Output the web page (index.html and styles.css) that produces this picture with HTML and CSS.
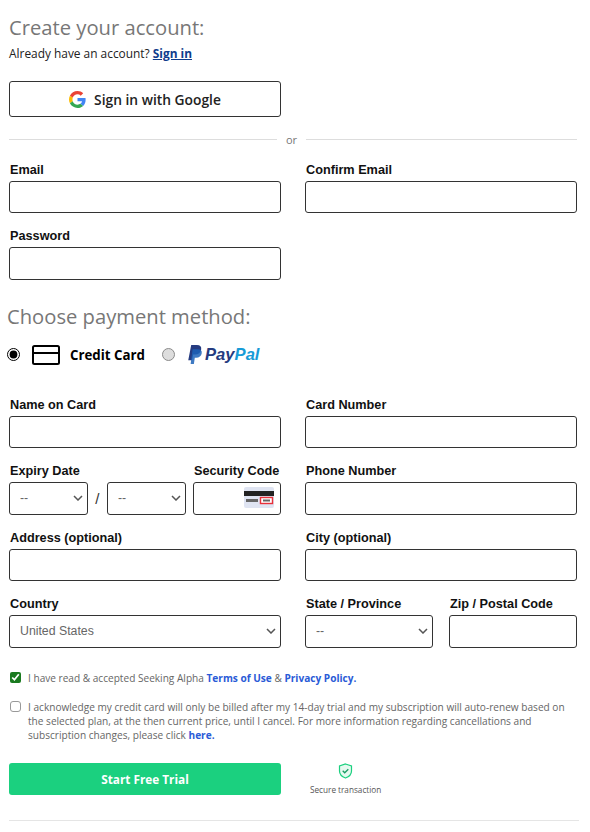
FILE: index.html
```html
<!DOCTYPE html>
<html lang="en">
<head>
    <meta charset="UTF-8">
    <meta name="viewport" content="width=device-width, initial-scale=1.0">
    <title>Create your account</title>
    <link rel="stylesheet" href="styles.css">
</head>
<body>
    <div class="container">
        <h2 class="heading">Create your account:</h2>
        <p class="signin-text">Already have an account? <a href="#" class="signin-link">Sign in</a></p>

        <button type="button" class="google-btn">
            <svg width="17" height="17" viewBox="0 0 48 48">
                <path fill="#EA4335" d="M24 9.5c3.5 0 6.7 1.2 9.2 3.6l6.9-6.9C35.9 2.4 30.5 0 24 0 14.6 0 6.5 5.4 2.6 13.2l8 6.2C12.5 13.7 17.800 9.500 24 9.500z"/>
                <path fill="#4285F4" d="M46.900 24.500c0-1.600-.1-3.100-.4-4.500H24v9h12.900c-.6 3-2.200 5.500-4.700 7.200l7.700 6c4.500-4.200 7-10.300 7-17.700z"/>
                <path fill="#FBBC05" d="M10.600 28.600c-.5-1.400-.8-3-.8-4.600s.3-3.200.8-4.600l-8-6.200C.9 16.500 0 20.100 0 24s.9 7.500 2.600 10.800l8-6.200z"/>
                <path fill="#34A853" d="M24 48c6.500 0 11.900-2.100 15.900-5.800l-7.700-6c-2.200 1.400-4.900 2.300-8.200 2.300-6.200 0-11.500-4.200-13.400-9.900l-8 6.200C6.500 42.600 14.600 48 24 48z"/>
            </svg>
            <span>Sign in with Google</span>
        </button>

        <div class="or-divider"><span>or</span></div>

        <div class="form-grid">
            <div class="field">
                <label for="email">Email</label>
                <input type="text" id="email">
            </div>
            <div class="field">
                <label for="confirm-email">Confirm Email</label>
                <input type="text" id="confirm-email">
            </div>
            <div class="field">
                <label for="password">Password</label>
                <input type="password" id="password">
            </div>
        </div>

        <h2 class="heading payment-heading">Choose payment method:</h2>
        <div class="payment-methods">
            <input type="radio" name="method" class="radio" checked>
            <svg class="card-icon" width="28" height="20" viewBox="0 0 28 20">
                <rect x="1" y="1" width="26" height="18" rx="1.500" fill="none" stroke="#000" stroke-width="2"/>
                <rect x="1" y="7" width="26" height="2" fill="#000"/>
            </svg>
            <span class="method-name">Credit Card</span>
            <input type="radio" name="method" class="radio radio-off">
            <svg class="paypal-mark" width="16" height="19" viewBox="0 0 16 20">
                <path fill="#253B80" d="M4 0h6c3.500 0 5 1.800 4.500 4.700C13.900 8.300 11.500 10 8.300 10H6l-1.100 6H.9z"/>
                <path fill="#1c63b8" opacity="0.85" d="M5.500 4.500h5.200c3.300 0 4.900 1.400 4.400 4.300-.5 3-2.800 4.700-5.800 4.700H7.800L6.800 20H3.400z"/>
            </svg>
            <span class="paypal-text">Pay<span class="paypal-light">Pal</span></span>
        </div>

        <div class="form-grid card-grid">
            <div class="field">
                <label for="name">Name on Card</label>
                <input type="text" id="name">
            </div>
            <div class="field">
                <label for="number">Card Number</label>
                <input type="text" id="number">
            </div>
            <div class="expiry-row">
                <div class="field">
                    <label>Expiry Date</label>
                    <div class="expiry-selects">
                        <select class="select-month"><option>--</option></select>
                        <span class="slash">/</span>
                        <select class="select-year"><option>--</option></select>
                    </div>
                </div>
                <div class="field security-field">
                    <label for="code">Security Code</label>
                    <div class="security-box">
                        <input type="text" id="code">
                        <svg class="cvv-icon" width="30" height="21" viewBox="0 0 30 21">
                            <rect width="30" height="21" rx="2" fill="#dfe4f2"/>
                            <rect y="4" width="30" height="5" fill="#222"/>
                            <rect x="2" y="12" width="12" height="3" fill="#666"/>
                            <rect x="16.500" y="10.500" width="12" height="6" fill="#fff" stroke="#e8303a" stroke-width="1.400"/>
                            <rect x="19" y="12.500" width="7" height="2" fill="#666"/>
                        </svg>
                    </div>
                </div>
            </div>
            <div class="field">
                <label for="phone">Phone Number</label>
                <input type="text" id="phone">
            </div>
            <div class="field">
                <label for="address">Address (optional)</label>
                <input type="text" id="address">
            </div>
            <div class="field">
                <label for="city">City (optional)</label>
                <input type="text" id="city">
            </div>
            <div class="field">
                <label for="country">Country</label>
                <select id="country" class="select-country"><option>United States</option></select>
            </div>
            <div class="state-row">
                <div class="field">
                    <label for="state">State / Province</label>
                    <select id="state"><option>--</option></select>
                </div>
                <div class="field">
                    <label for="zip">Zip / Postal Code</label>
                    <input type="text" id="zip">
                </div>
            </div>
        </div>

        <div class="terms">
            <div class="term-row">
                <input type="checkbox" class="check-on" checked>
                <p>I have read &amp; accepted Seeking Alpha <a href="#">Terms of Use</a> &amp; <a href="#">Privacy Policy.</a></p>
            </div>
            <div class="term-row">
                <input type="checkbox" class="check-off">
                <p>I acknowledge my credit card will only be billed after my 14-day trial and my subscription will auto-renew based on the selected plan, at the then current price, until I cancel. For more information regarding cancellations and subscription changes, please click <a href="#">here.</a></p>
            </div>
        </div>

        <div class="submit-row">
            <button type="button" class="submit-btn">Start Free Trial</button>
            <div class="secure">
                <svg width="15" height="16" viewBox="0 0 14 16">
                    <path d="M7 1l6 2v5c0 3.500-2.500 5.800-6 7-3.500-1.200-6-3.500-6-7V3z" fill="#e6f9f0" stroke="#1bd07f" stroke-width="1.200"/>
                    <path d="M4.200 7.800l2 2 3.600-3.600" fill="none" stroke="#1a9c63" stroke-width="1.300"/>
                </svg>
                <span>Secure transaction</span>
            </div>
        </div>

        <hr class="bottom-line">
    </div>
</body>
</html>
```
FILE: styles.css
```css
/* global */
body {
    margin: 0;
    background: #fff;
    color: #000;
    font-family: 'Liberation Sans', Arial, sans-serif;
}

.container {
    width: 568px;
    padding: 13px 0 0 9px;
}

.heading {
    margin: 0;
    font-family: 'Open Sans', 'Noto Sans', sans-serif;
    font-size: 20.200px;
    line-height: 28px;
    font-weight: 400;
    color: #777;
}

.signin-text {
    margin: 4px 0 0;
    font-family: 'Open Sans', sans-serif;
    font-size: 11.900px;
    line-height: 16px;
    color: #222;
}

.signin-link {
    color: #0f3c8c;
    font-weight: 700;
}

/* google button */
.google-btn {
    display: flex;
    align-items: center;
    justify-content: center;
    gap: 8px;
    width: 272px;
    height: 36px;
    margin-top: 20px;
    padding: 0;
    background: #fff;
    border: 1px solid #333;
    border-radius: 3px;
    font-family: 'Open Sans', sans-serif;
    font-size: 13.800px;
    font-weight: 600;
    color: #222;
}

.or-divider {
    display: flex;
    align-items: center;
    gap: 9px;
    height: 16px;
    margin-top: 14px;
    font-family: 'Open Sans', sans-serif;
    font-size: 11px;
    color: #777;
}

.or-divider::before {
    content: "";
    width: 268px;
    height: 1px;
    background: #ddd;
}

.or-divider::after {
    content: "";
    flex: 1;
    height: 1px;
    background: #ddd;
}

/* form */
.form-grid {
    display: grid;
    grid-template-columns: 272px 272px;
    column-gap: 24px;
    row-gap: 16px;
    margin-top: 15.600px;
}

.field label {
    display: block;
    height: 18px;
    padding-left: 1px;
    font-size: 12.700px;
    line-height: 14px;
    font-weight: 700;
    white-space: nowrap;
    color: #111;
}

.field input,
.field select {
    display: block;
    width: 100%;
    height: 32.500px;
    margin: 0;
    box-sizing: border-box;
    background-color: #fff;
    border: 1px solid #333;
    border-radius: 3px;
    font-family: 'Liberation Sans', Arial, sans-serif;
    font-size: 12.300px;
    color: #666;
    padding-left: 10px;
}

.field select {
    appearance: none;
    background-image: url("data:image/svg+xml,%3Csvg xmlns='http://www.w3.org/2000/svg' width='10' height='6'%3E%3Cpath d='M1 1l4 4 4-4' fill='none' stroke='%23555' stroke-width='1.500'/%3E%3C/svg%3E");
    background-repeat: no-repeat;
    background-position: right 4px center;
}

.payment-heading {
    margin: 22.400px 0 0 -2px;
}

.payment-methods {
    display: flex;
    align-items: center;
    height: 24px;
    margin-top: 13px;
}

.radio {
    width: 13px;
    height: 13px;
    margin: 0 0 0 -2px;
    accent-color: #000;
}

.card-icon {
    margin-left: 12px;
}

.method-name {
    margin-left: 10px;
    font-family: 'Open Sans', sans-serif;
    font-size: 13.300px;
    font-weight: 700;
}

.radio-off {
    appearance: none;
    box-sizing: border-box;
    margin-left: 17px;
    background: #ddd;
    border: 1px solid #8a8a8a;
    border-radius: 50%;
}

.paypal-mark {
    margin-left: 12px;
}

.paypal-text {
    margin-left: 2px;
    font-family: 'Liberation Sans', Arial, sans-serif;
    font-size: 16.600px;
    font-weight: 700;
    font-style: italic;
    color: #253b80;
}

.paypal-light {
    color: #179bd7;
}

.card-grid {
    margin-top: 30.700px;
}

.expiry-row {
    display: flex;
    justify-content: space-between;
}

.expiry-selects {
    display: flex;
    align-items: center;
}

.expiry-selects select {
    width: 78.500px;
}

.slash {
    width: 19.500px;
    text-align: center;
    font-size: 15px;
    color: #333;
}

.security-field {
    width: 88px;
}

.security-box {
    position: relative;
}

.cvv-icon {
    position: absolute;
    right: 7px;
    top: 5px;
}

.state-row {
    display: grid;
    grid-template-columns: 128px 128px;
    column-gap: 16px;
}

/* terms */
.terms {
    margin-top: 23.300px;
    font-family: 'Open Sans', sans-serif;
    font-size: 10.100px;
    line-height: 14px;
    color: #666;
}

.term-row {
    display: flex;
    gap: 7px;
    margin-bottom: 15px;
}

.term-row input {
    flex: none;
    width: 11px;
    height: 11px;
    margin: 1px 0 0 1px;
}

.check-on {
    accent-color: #1a7a1f;
}

.check-off {
    appearance: none;
    box-sizing: border-box;
    background: #fff;
    border: 1px solid #999;
    border-radius: 3px;
}

.term-row p {
    margin: 0;
    width: 540px;
}

.term-row a {
    color: #2a5bd7;
    font-weight: 700;
    text-decoration: none;
}

/* bottom */
.submit-row {
    display: flex;
    align-items: flex-start;
    margin-top: 21px;
}

.submit-btn {
    width: 272px;
    height: 32px;
    padding: 0;
    background: #1bd07f;
    border: none;
    border-radius: 3px;
    font-family: 'Open Sans', sans-serif;
    font-size: 11.800px;
    font-weight: 700;
    color: #fff;
}

.secure {
    display: flex;
    flex-direction: column;
    align-items: center;
    gap: 5px;
    margin-left: 29px;
    font-family: 'Open Sans', sans-serif;
    font-size: 8.200px;
    color: #555;
}

.bottom-line {
    width: 570px;
    margin: 25px 0 0;
    border: none;
    border-top: 1px solid #e5e5e5;
}
```
